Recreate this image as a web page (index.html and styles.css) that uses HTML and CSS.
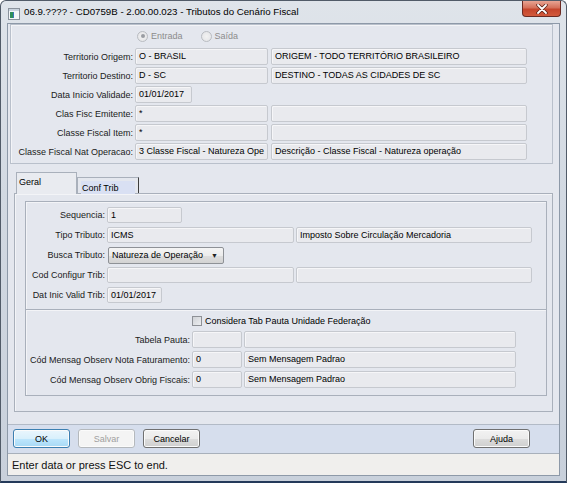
FILE: index.html
```html
<!DOCTYPE html>
<html>
<head>
<meta charset="utf-8">
<link rel="stylesheet" href="styles.css">
</head>
<body>
<div class="window">
  <div class="titlebar">
    <svg class="app-icon" width="12" height="12" viewBox="0 0 12 12">
      <rect x="0.5" y="0.5" width="11" height="11" fill="#f4f6f8" stroke="#8a929c"/>
      <rect x="1" y="1" width="10" height="2" fill="#c9d3de"/>
      <rect x="2" y="4" width="3" height="6" fill="#2f8f5a"/>
      <rect x="5" y="4" width="1" height="6" fill="#3a78b8"/>
    </svg>
    <span class="title">06.9.???? - CD0759B - 2.00.00.023 - Tributos do Cenário Fiscal</span>
    <div class="close"><svg width="12" height="10" viewBox="0 0 12 10"><path d="M2 1 L10 9 M10 1 L2 9" stroke="#5a2016" stroke-width="3.4" stroke-linecap="round"/><path d="M2 1 L10 9 M10 1 L2 9" stroke="#ffffff" stroke-width="1.8" stroke-linecap="round"/></svg></div>
  </div>
  <div class="client">
    <div class="content">
      <div class="topbox">
        <div class="radios">
          <span class="radio checked"></span><span class="rlabel">Entrada</span>
          <span class="radio"></span><span class="rlabel">Saída</span>
        </div>
        <div class="grid top-grid">
          <span class="lbl">Territorio Origem:</span><span class="inp">O - BRASIL</span><span class="inp">ORIGEM - TODO TERRITÓRIO BRASILEIRO</span>
          <span class="lbl">Territorio Destino:</span><span class="inp">D - SC</span><span class="inp">DESTINO - TODAS AS CIDADES DE SC</span>
          <span class="lbl">Data Inicio Validade:</span><span class="inp w57">01/01/2017</span><span></span>
          <span class="lbl">Clas Fisc Emitente:</span><span class="inp">*</span><span class="inp"></span>
          <span class="lbl">Classe Fiscal Item:</span><span class="inp">*</span><span class="inp"></span>
          <span class="lbl">Classe Fiscal Nat Operacao:</span><span class="inp">3 Classe Fiscal - Natureza Ope</span><span class="inp">Descrição - Classe Fiscal - Natureza operação</span>
        </div>
      </div>

      <div class="tabs">
        <div class="tab active">Geral</div>
        <div class="tab"><span class="tab-hl">Conf Trib</span></div>
      </div>
      <div class="tabpanel">
        <div class="panel p1">
          <div class="grid g1">
            <span class="lbl">Sequencia:</span><span class="inp w75">1</span><span></span>
            <span class="lbl">Tipo Tributo:</span><span class="inp full">ICMS</span><span class="inp full">Imposto Sobre Circulação Mercadoria</span>
            <span class="lbl">Busca Tributo:</span><span class="select">Natureza de Operação<span class="arrow">▼</span></span><span></span>
            <span class="lbl">Cod Configur Trib:</span><span class="inp full"></span><span class="inp full"></span>
            <span class="lbl">Dat Inic Valid Trib:</span><span class="inp w55">01/01/2017</span><span></span>
          </div>
        </div>
        <div class="panel p2">
          <div class="check-row"><span class="checkbox"></span><span>Considera Tab Pauta Unidade Federação</span></div>
          <div class="grid g2">
            <span class="lbl">Tabela Pauta:</span><span class="inp"></span><span class="inp"></span>
            <span class="lbl">Cód Mensag Observ Nota Faturamento:</span><span class="inp">0</span><span class="inp">Sem Mensagem Padrao</span>
            <span class="lbl">Cód Mensag Observ Obrig Fiscais:</span><span class="inp">0</span><span class="inp">Sem Mensagem Padrao</span>
          </div>
        </div>
      </div>
    </div>
    <div class="buttonbar">
      <button class="btn focus">OK</button>
      <button class="btn disabled">Salvar</button>
      <button class="btn">Cancelar</button>
      <button class="btn right">Ajuda</button>
    </div>
    <div class="statusbar">Enter data or press ESC to end.</div>
  </div>
</div>
</body>
</html>
```

FILE: styles.css
```css
html, body {
  margin: 0;
  padding: 0;
  background: #ffffff;
  overflow: hidden;
}
body {
  font-family: "Liberation Sans", Arial, sans-serif;
}
.window {
  box-sizing: border-box;
  width: 567px;
  height: 483px;
  border: 1px solid #515b68;
  border-bottom: 2px solid #243a5a;
  border-radius: 6px 6px 0 0;
  background: linear-gradient(180deg, #dfe4ea 0%, #d2d9e2 40%, #c8d0db 100%);
  display: flex;
  flex-direction: column;
  padding-bottom: 5px;
}
.titlebar {
  height: 22px;
  display: flex;
  align-items: flex-start;
  flex: none;
}
.app-icon {
  margin: 7px 0 0 7px;
  flex: none;
}
.title {
  margin: 5px 0 0 4px;
  font-size: 9.7px;
  line-height: 12px;
  color: #000;
  white-space: nowrap;
}
.close {
  margin-left: auto;
  margin-right: 5px;
  width: 39px;
  height: 16px;
  box-sizing: border-box;
  border: 1px solid #6b2a22;
  border-top: none;
  border-radius: 0 0 4px 4px;
  background: linear-gradient(180deg, #e8a493 0%, #d4705a 45%, #c5452c 55%, #d25a3c 100%);
  display: flex;
  align-items: center;
  justify-content: center;
}
.client {
  flex: 1;
  margin: 0 6px;
  border: 1px solid #8d99a8;
  display: flex;
  flex-direction: column;
  min-height: 0;
}
.content {
  flex: 1;
  background: #e4e7ee;
  padding: 0 6px 8px 2px;
  font-size: 9px;
  color: #1a1a1a;
}
.topbox {
  border: 1px solid #b9c0cb;
  box-shadow: inset 1px 1px 0 #f3f4f7;
  padding: 5px 0 3px 0;
}
.radios {
  display: flex;
  align-items: center;
  height: 12px;
  padding-left: 126px;
  margin-bottom: 6px;
  color: #8c8c8c;
}
.radio {
  box-sizing: border-box;
  width: 11px;
  height: 11px;
  border-radius: 50%;
  border: 1px solid #b9bcc1;
  background: radial-gradient(circle, #f2f2f2 0%, #e2e3e6 100%);
  position: relative;
  margin-right: 3px;
}
.radio.checked::after {
  content: "";
  position: absolute;
  left: 2.5px;
  top: 2.5px;
  width: 4px;
  height: 4px;
  border-radius: 50%;
  background: #9a9da3;
}
.rlabel {
  margin-right: 18px;
}
.grid {
  display: grid;
  column-gap: 2px;
  align-items: center;
}
.top-grid {
  grid-template-columns: 122px 133px 257px;
  grid-auto-rows: 17px;
  row-gap: 2px;
}
.top-grid .inp + .inp {
  margin-left: 1px;
}
.lbl {
  text-align: right;
  white-space: nowrap;
  line-height: 12px;
  justify-self: end;
}
.inp {
  box-sizing: border-box;
  height: 17px;
  border: 1px solid #c6c9cf;
  border-radius: 2px;
  background: #e9eaee;
  box-shadow: inset 1px 1px 0 #f6f6f8;
  padding: 0 3px;
  line-height: 15px;
  color: #000;
  white-space: nowrap;
  overflow: hidden;
}
.w57 { width: 57px; }
.w75 { width: 75px; justify-self: start; }
.w55 { width: 55px; justify-self: start; }
.tabs {
  display: flex;
  align-items: flex-end;
  height: 21px;
  margin: 8px 0 0 4px;
  padding-left: 2px;
  position: relative;
  z-index: 1;
}
.tab {
  box-sizing: border-box;
  height: 16px;
  width: 62px;
  border: 1px solid #a9b0bb;
  border-right: 1px solid #3d3d3d;
  border-bottom: none;
  background: #e4e7ee;
  padding: 3px 3px 0 3px;
  color: #000;
}
.tab.active {
  width: 61px;
  height: 22px;
  margin-bottom: -1px;
  border-right-color: #a9b0bb;
  background: #e9ebf0;
  padding: 4px 2px 0 2px;
}
.tab-hl {
  display: block;
  height: 12px;
  background: #d9e0f3;
  padding: 1px 1px 0 1px;
  line-height: 12px;
}
.tabpanel {
  border: 1px solid #a9b0bb;
  box-shadow: inset 1px 1px 0 #f3f4f7;
  margin-left: 4px;
  padding: 7px 5px 15px 10px;
}
.panel {
  border: 1px solid #a9b0bb;
  box-shadow: inset 1px 1px 0 #f3f4f7;
}
.p1 {
  padding: 5px 0 6px 0;
}
.g1 {
  grid-template-columns: 79px 187px 236px;
  grid-auto-rows: 16px;
  row-gap: 4px;
}
.g1 .inp { height: 16px; line-height: 14px; }
.g1 .full { width: 100%; }
.select {
  box-sizing: border-box;
  width: 116px;
  height: 17px;
  margin-left: 1px;
  justify-self: start;
  border: 1px solid #8e9196;
  border-radius: 2px;
  background: linear-gradient(180deg, #f4f4f4 0%, #ececec 50%, #dedede 51%, #d3d3d3 100%);
  padding: 0 3px;
  line-height: 15px;
  color: #000;
  display: flex;
  justify-content: space-between;
}
.arrow {
  font-size: 7px;
  color: #222;
  padding-right: 2px;
}
.p2 {
  border-top: none;
  padding: 6px 0 7px 0;
}
.check-row {
  display: flex;
  align-items: center;
  height: 10px;
  padding-left: 166px;
  margin-bottom: 5px;
  color: #000;
}
.checkbox {
  box-sizing: border-box;
  width: 10px;
  height: 10px;
  border: 1px solid #8e9196;
  background: linear-gradient(135deg, #d0d2d6, #eceef0);
  margin-right: 3px;
}
.g2 {
  grid-template-columns: 164px 50px 272px;
  grid-auto-rows: 17px;
  row-gap: 3px;
}
.buttonbar {
  height: 29px;
  box-sizing: border-box;
  background: #d6deed;
  border-top: 1px solid #b2bac6;
  display: flex;
  align-items: flex-start;
  gap: 8px;
  padding: 4px 0 0 5px;
}
.btn {
  box-sizing: border-box;
  width: 57px;
  height: 19px;
  border: 1px solid #707070;
  border-radius: 3px;
  background: linear-gradient(180deg, #f2f2f2 0%, #ebebeb 50%, #dddddd 51%, #cfcfcf 100%);
  font-family: "Liberation Sans", Arial, sans-serif;
  font-size: 9px;
  color: #000;
  padding: 0;
  box-shadow: inset 0 0 0 1px #fbfbfb;
}
.btn.focus {
  border-color: #3c7fb1;
  background: linear-gradient(180deg, #eaf6fd 0%, #d9f0fc 50%, #bee6fd 51%, #a7d9f5 100%);
}
.btn.disabled {
  border-color: #b5b9bd;
  background: #f4f4f4;
  color: #a0a0a0;
}
.btn.right {
  margin-left: auto;
  margin-right: 29px;
}
.statusbar {
  height: 22px;
  box-sizing: border-box;
  background: #f0efed;
  border-top: 1px solid #a8b0bb;
  padding: 3px 0 0 4px;
  font-size: 11px;
  line-height: 16px;
  color: #111;
}
```
